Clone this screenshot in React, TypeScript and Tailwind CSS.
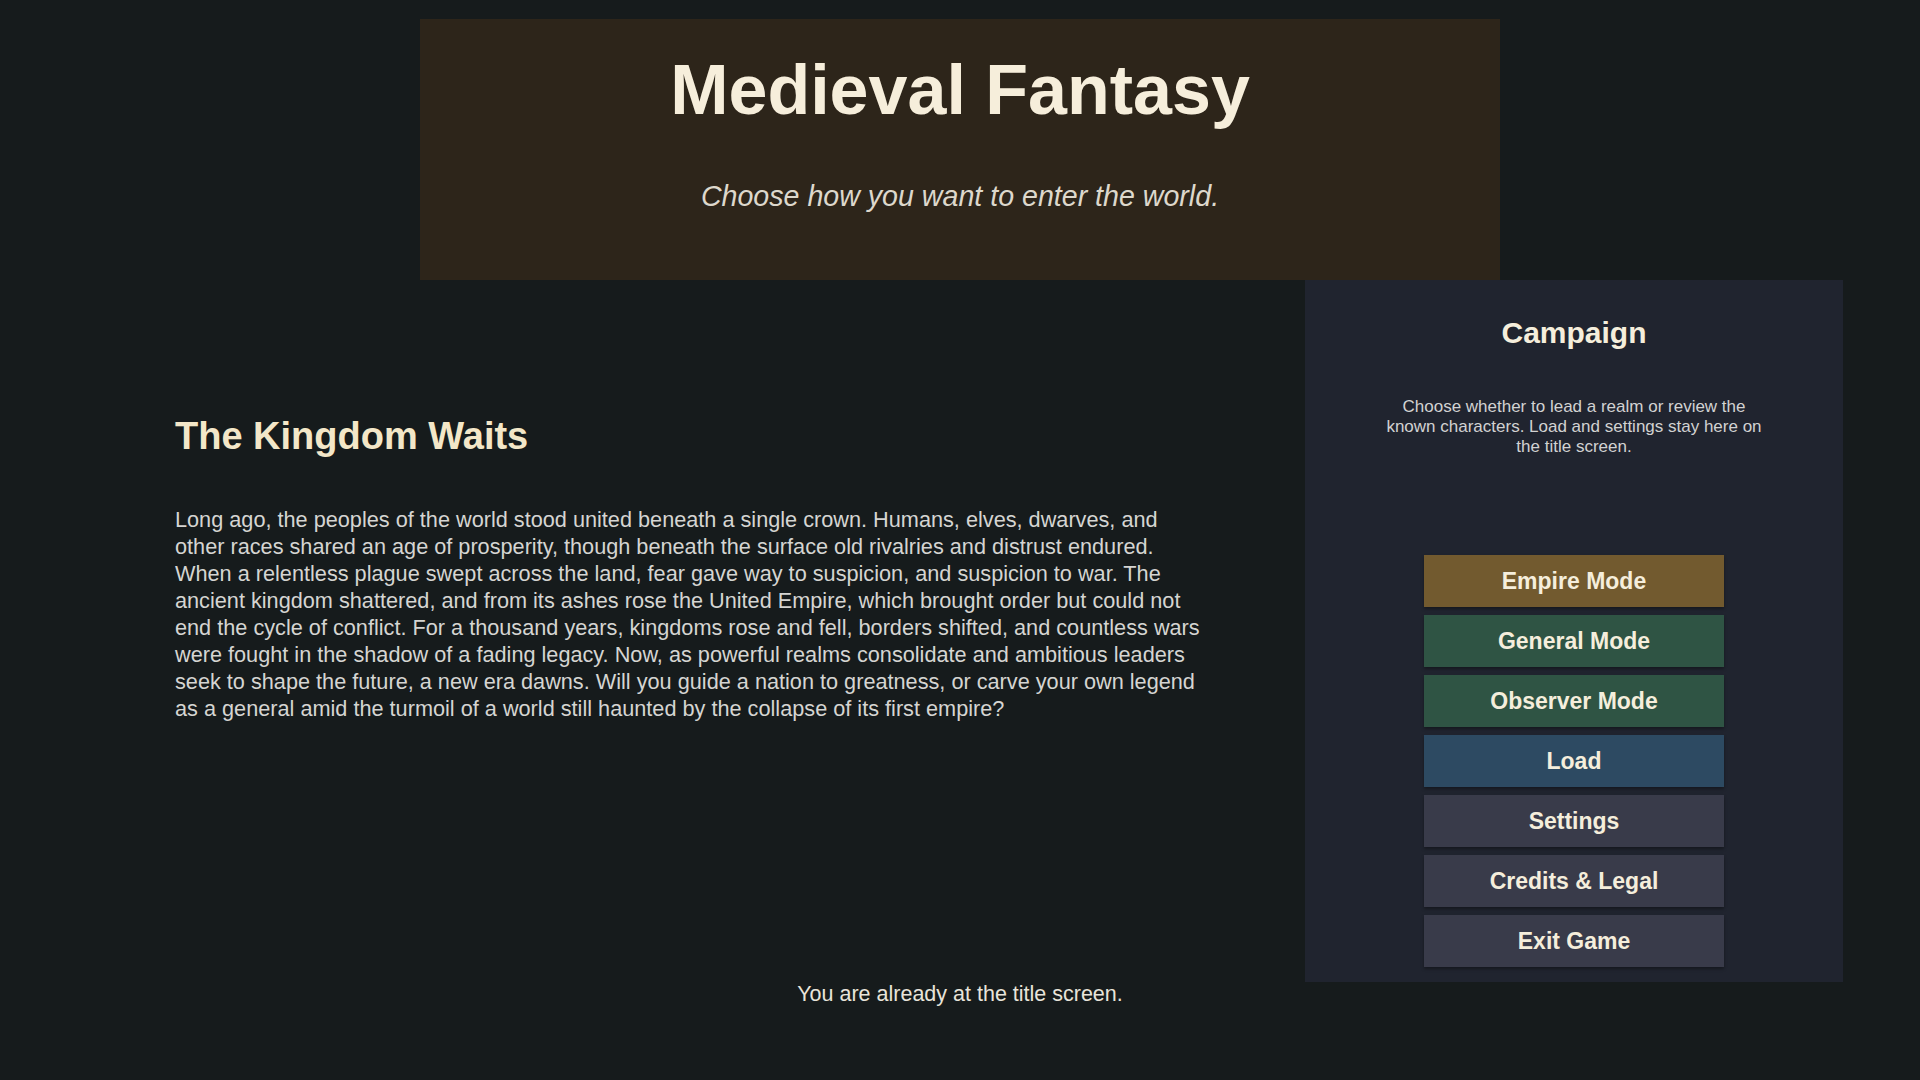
const modes = [
  { label: 'Empire Mode', tone: 'bg-[#725a2f]' },
  { label: 'General Mode', tone: 'bg-[#2f5444]' },
  { label: 'Observer Mode', tone: 'bg-[#2f5444]' },
  { label: 'Load', tone: 'bg-[#2d4a62]' },
  { label: 'Settings', tone: 'bg-[#393b4a]' },
  { label: 'Credits & Legal', tone: 'bg-[#393b4a]' },
  { label: 'Exit Game', tone: 'bg-[#393b4a]' },
];

function CampaignPanel() {
  return (
    <aside className="mr-[77px] w-[538px] h-[702px] bg-[#20242f] flex flex-col items-center pt-[36px]">
      <h2 className="text-[30px] leading-[34px] font-bold text-[#f5eedc]">Campaign</h2>
      <p className="mt-[47px] w-[385px] text-center text-[17px] leading-[20px] text-[#d2d2d2]">
        Choose whether to lead a realm or review the known characters. Load and settings stay here on the title screen.
      </p>

      {/* Menu buttons */}
      <div className="mt-[98px] flex flex-col gap-[8px]">
        {modes.map((m) => (
          <button
            key={m.label}
            className={`${m.tone} w-[300px] h-[52px] text-[23px] font-bold text-[#f5eedc] shadow-[0_2px_3px_rgba(0,0,0,0.35)]`}
          >
            {m.label}
          </button>
        ))}
      </div>
    </aside>
  );
}

export default function App() {
  return (
    <div className="min-h-screen w-full bg-[#161b1c] font-['Liberation_Sans',Arial,sans-serif] flex flex-col items-center pt-[19px]">
      {/* Header */}
      <header className="w-[1080px] h-[261px] bg-[#2d251a] flex flex-col items-center">
        <h1 className="mt-[36px] text-[70px] leading-none font-bold text-[#f6eedb]">Medieval Fantasy</h1>
        <p className="mt-[57px] text-[28.6px] leading-none italic text-[#ddd8cc]">
          Choose how you want to enter the world.
        </p>
      </header>

      <div className="w-full flex justify-between items-start">
        <section className="ml-[175px] w-[1030px] pt-[134px]">
          <h2 className="text-[38px] leading-[44px] font-bold text-[#f3e7c8]">The Kingdom Waits</h2>
          <p className="mt-[48px] text-[21.7px] leading-[27px] text-[#d5d5d2]">
            Long ago, the peoples of the world stood united beneath a single crown. Humans, elves, dwarves, and other races
            shared an age of prosperity, though beneath the surface old rivalries and distrust endured. When a relentless
            plague swept across the land, fear gave way to suspicion, and suspicion to war. The ancient kingdom shattered,
            and from its ashes rose the United Empire, which brought order but could not end the cycle of conflict. For a
            thousand years, kingdoms rose and fell, borders shifted, and countless wars were fought in the shadow of a fading
            legacy. Now, as powerful realms consolidate and ambitious leaders seek to shape the future, a new era dawns. Will
            you guide a nation to greatness, or carve your own legend as a general amid the turmoil of a world still haunted
            by the collapse of its first empire?
          </p>
        </section>
        <CampaignPanel />
      </div>

      <p className="mt-[2px] text-[21.5px] leading-[20px] text-[#e8e4da]">You are already at the title screen.</p>
    </div>
  );
}
